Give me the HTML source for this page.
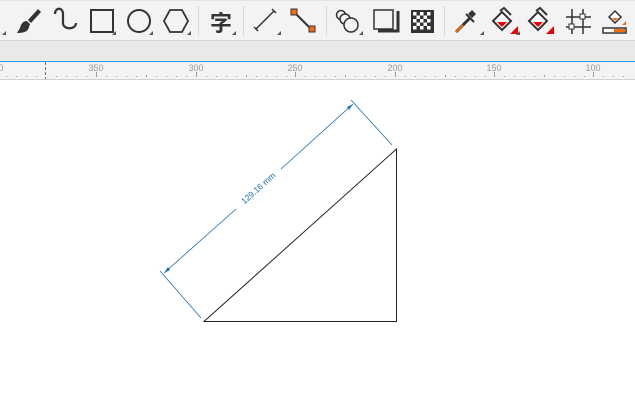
<!DOCTYPE html>
<html><head><meta charset="utf-8"><style>
html,body{margin:0;padding:0;width:635px;height:418px;overflow:hidden;background:#fff;font-family:"Liberation Sans","Noto Sans CJK SC",sans-serif}
</style></head><body>
<svg width="635" height="418" xmlns="http://www.w3.org/2000/svg" style="position:absolute;left:0;top:0">
<rect x="0" y="0" width="635" height="40" fill="#f3f3f3"/>
<rect x="0" y="0" width="635" height="1" fill="#e6e6e6"/>
<rect x="0" y="40" width="635" height="1" fill="#d6d6d6"/>
<rect x="0" y="41" width="635" height="20" fill="#e9e9e9"/>
<rect x="0" y="61" width="635" height="1" fill="#1e9be6"/>
<rect x="0" y="62" width="635" height="17" fill="#f3f3f3"/>
<rect x="0" y="79" width="635" height="1" fill="#d0d0d0"/>
<line x1="45.5" y1="62" x2="45.5" y2="79" stroke="#777" stroke-dasharray="3,2"/>
<g fill="#999" font-size="9" text-anchor="middle">
<text x="1" y="71">0</text><text x="96" y="71">350</text><text x="196" y="71">300</text><text x="295" y="71">250</text><text x="395" y="71">200</text><text x="494" y="71">150</text><text x="593" y="71">100</text>
</g>
<g stroke="#999" stroke-width="1">
<line x1="96.5" y1="72" x2="96.5" y2="77"/><line x1="196.5" y1="72" x2="196.5" y2="77"/><line x1="295.5" y1="72" x2="295.5" y2="77"/><line x1="395.5" y1="72" x2="395.5" y2="77"/><line x1="494.5" y1="72" x2="494.5" y2="77"/><line x1="593.5" y1="72" x2="593.5" y2="77"/>
</g>
<g fill="#999">
<rect x="6" y="76" width="1" height="1"/><rect x="16" y="76" width="1" height="1"/><rect x="26" y="76" width="1" height="1"/><rect x="36" y="76" width="1" height="1"/><rect x="56" y="76" width="1" height="1"/><rect x="66" y="76" width="1" height="1"/><rect x="76" y="76" width="1" height="1"/><rect x="86" y="76" width="1" height="1"/><rect x="106" y="76" width="1" height="1"/><rect x="116" y="76" width="1" height="1"/><rect x="126" y="76" width="1" height="1"/><rect x="136" y="76" width="1" height="1"/><rect x="146" y="75" width="1" height="2"/><rect x="156" y="76" width="1" height="1"/><rect x="166" y="76" width="1" height="1"/><rect x="176" y="76" width="1" height="1"/><rect x="186" y="76" width="1" height="1"/><rect x="206" y="76" width="1" height="1"/><rect x="216" y="76" width="1" height="1"/><rect x="226" y="76" width="1" height="1"/><rect x="236" y="76" width="1" height="1"/><rect x="246" y="75" width="1" height="2"/><rect x="256" y="76" width="1" height="1"/><rect x="266" y="76" width="1" height="1"/><rect x="276" y="76" width="1" height="1"/><rect x="286" y="76" width="1" height="1"/><rect x="305" y="76" width="1" height="1"/><rect x="315" y="76" width="1" height="1"/><rect x="325" y="76" width="1" height="1"/><rect x="335" y="76" width="1" height="1"/><rect x="345" y="75" width="1" height="2"/><rect x="355" y="76" width="1" height="1"/><rect x="365" y="76" width="1" height="1"/><rect x="375" y="76" width="1" height="1"/><rect x="385" y="76" width="1" height="1"/><rect x="405" y="76" width="1" height="1"/><rect x="415" y="76" width="1" height="1"/><rect x="425" y="76" width="1" height="1"/><rect x="435" y="76" width="1" height="1"/><rect x="445" y="75" width="1" height="2"/><rect x="455" y="76" width="1" height="1"/><rect x="465" y="76" width="1" height="1"/><rect x="475" y="76" width="1" height="1"/><rect x="485" y="76" width="1" height="1"/><rect x="504" y="76" width="1" height="1"/><rect x="514" y="76" width="1" height="1"/><rect x="524" y="76" width="1" height="1"/><rect x="534" y="76" width="1" height="1"/><rect x="544" y="75" width="1" height="2"/><rect x="554" y="76" width="1" height="1"/><rect x="564" y="76" width="1" height="1"/><rect x="574" y="76" width="1" height="1"/><rect x="584" y="76" width="1" height="1"/><rect x="603" y="76" width="1" height="1"/><rect x="613" y="76" width="1" height="1"/><rect x="623" y="76" width="1" height="1"/>
</g>
<g fill="#d8d8d8"><rect x="198" y="6" width="1" height="30"/><rect x="243" y="6" width="1" height="30"/><rect x="326" y="6" width="1" height="30"/><rect x="444" y="6" width="1" height="30"/></g>
<g fill="#555">
<path d="M2 35h4v-4z"/><path d="M112 35h4v-4z"/><path d="M149 35h4v-4z"/><path d="M187 35h4v-4z"/><path d="M232 35h4v-4z"/><path d="M277 35h4v-4z"/><path d="M359 35h4v-4z"/><path d="M480 35h4v-4z"/><path d="M516 35h4v-4z"/>
</g>
<path d="M38 9l3 3-10 11-3-3z" fill="#333"/><path d="M27 21c-4 0-6 3-7 7l-3 5c6 0 11-1 12-6l1-3z" fill="#333"/>
<path d="M55 14c0-7 8-7 8 0v9c0 7 13 7 13 0" fill="none" stroke="#333" stroke-width="2.2"/>
<rect x="91" y="10" width="22" height="22" fill="none" stroke="#333" stroke-width="2"/>
<circle cx="139" cy="21" r="11" fill="none" stroke="#333" stroke-width="2"/>
<path d="M170 10h12l6 11-6 11h-12l-6-11z" fill="none" stroke="#333" stroke-width="1.8"/>
<text x="221" y="31" font-size="22" font-weight="bold" fill="#333" text-anchor="middle" font-family="'Noto Sans CJK SC',sans-serif">字</text>
<path d="M256 29l18-18M254 27l4 4M272 9l4 4" stroke="#333" stroke-width="1.5" fill="none"/>
<line x1="295" y1="13" x2="311" y2="29" stroke="#333" stroke-width="2"/>
<rect x="291" y="9" width="6" height="6" fill="#f26c0e" stroke="#333"/><rect x="309" y="26" width="6" height="6" fill="#f26c0e" stroke="#333"/>
<circle cx="341" cy="15" r="4.5" fill="#f3f3f3" stroke="#333" stroke-width="1.5"/><circle cx="345" cy="19" r="5" fill="#f3f3f3" stroke="#333" stroke-width="1.5"/><circle cx="351" cy="25" r="7" fill="#f3f3f3" stroke="#333" stroke-width="1.5"/>
<path d="M378 31h20v-20" fill="none" stroke="#333" stroke-width="3"/><rect x="374" y="10" width="19" height="19" fill="none" stroke="#333" stroke-width="1.5"/>
<rect x="411" y="10" width="23" height="23" fill="#333"/>
<g fill="#fff"><rect x="413" y="12" width="3.5" height="3.5"/><rect x="420" y="12" width="3.5" height="3.5"/><rect x="427" y="12" width="3.5" height="3.5"/><rect x="416.5" y="15.5" width="3.5" height="3.5"/><rect x="423.5" y="15.5" width="3.5" height="3.5"/><rect x="413" y="19" width="3.5" height="3.5"/><rect x="420" y="19" width="3.5" height="3.5"/><rect x="427" y="19" width="3.5" height="3.5"/><rect x="416.5" y="22.5" width="3.5" height="3.5"/><rect x="423.5" y="22.5" width="3.5" height="3.5"/><rect x="413" y="26" width="3.5" height="3.5"/><rect x="420" y="26" width="3.5" height="3.5"/><rect x="427" y="26" width="3.5" height="3.5"/></g>
<path d="M456 32l14-14" stroke="#333" stroke-width="3"/><path d="M456 32l7-7" stroke="#f26c0e" stroke-width="2"/><path d="M472 10l4 4-4 4-4-4z" fill="#333"/><line x1="466" y1="14" x2="474" y2="22" stroke="#333" stroke-width="2"/>
<path d="M493 21l9-9 9 9-9 9z" fill="#fff" stroke="#333" stroke-width="2"/><path d="M497 22h10l-5 5z" fill="#e00"/><path d="M510 34h8v-8z" fill="#e00"/><path d="M500 11l4-3 7 7" fill="none" stroke="#333" stroke-width="2"/>
<path d="M529 21l9-9 9 9-9 9z" fill="#fff" stroke="#333" stroke-width="2"/><path d="M533 22h10l-5 5z" fill="#e00"/><path d="M546 34h8v-8z" fill="#e00"/><path d="M536 11l4-3 7 7" fill="none" stroke="#333" stroke-width="2"/>
<path d="M572 9v25M583 9v25M566 17h25M566 27h25" stroke="#333" stroke-width="1.5"/><rect x="580" y="14" width="5" height="5" fill="#fff" stroke="#333"/><rect x="569" y="24" width="5" height="5" fill="#fff" stroke="#333"/>
<path d="M609 17l6-6 6 6-6 6z" fill="#fff" stroke="#333" stroke-width="1.5"/><path d="M612 18h6l-3 3z" fill="#f26c0e"/><rect x="603" y="28" width="23" height="5" fill="#fff" stroke="#333" stroke-width="1.5"/><rect x="614" y="29" width="11" height="3" fill="#f26c0e"/><path d="M622 25h4v-4z" fill="#f26c0e"/>

<path d="M204 321.5H396.5V149Z" fill="none" stroke="#222" stroke-width="1"/>
<g stroke="#1a6fb0" stroke-width="0.8" fill="none">
<line x1="201" y1="318" x2="160" y2="271"/>
<line x1="392" y1="145" x2="351" y2="100"/>
<line x1="164" y1="273" x2="236" y2="209"/>
<line x1="281" y1="169" x2="353" y2="104"/>
</g>
<path d="M164 273l6-3-2-3z" fill="#1a6fb0"/><path d="M353 104l-6 3 2 3z" fill="#1a6fb0"/>
<text x="258.5" y="191" font-size="8.5" fill="#1a6fb0" text-anchor="middle" transform="rotate(-41.8 258.5 188.5)">129.16 mm</text>
</svg>
</body></html>
